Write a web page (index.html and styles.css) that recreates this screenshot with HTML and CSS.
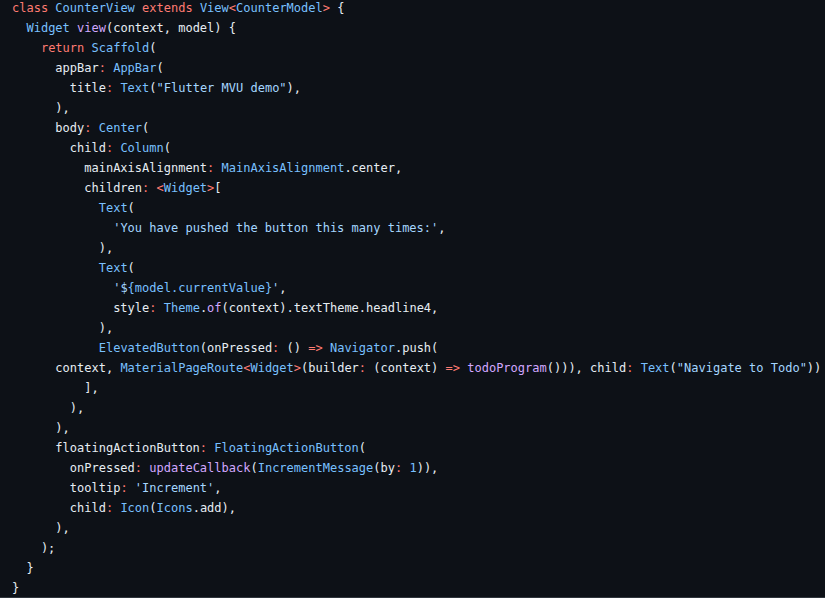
FILE: index.html
```html
<!DOCTYPE html>
<html lang="en">
<head>
    <meta charset="UTF-8">
    <meta name="viewport" content="width=device-width, initial-scale=1.0">
    <title>CounterView</title>
    <link rel="stylesheet" href="styles.css">
</head>
<body>
    <div class="code-view">
<pre class="code"><span class="k">class</span> <span class="t">CounterView</span> <span class="k">extends</span> <span class="t">View</span><span class="k">&lt;</span><span class="t">CounterModel</span><span class="k">&gt;</span> {
  <span class="t">Widget</span> <span class="f">view</span>(context, model) {
    <span class="k">return</span> <span class="t">Scaffold</span>(
      appBar<span class="k">:</span> <span class="t">AppBar</span>(
        title<span class="k">:</span> <span class="t">Text</span>(<span class="s">"Flutter MVU demo"</span>),
      ),
      body<span class="k">:</span> <span class="t">Center</span>(
        child<span class="k">:</span> <span class="t">Column</span>(
          mainAxisAlignment<span class="k">:</span> <span class="t">MainAxisAlignment</span>.center,
          children<span class="k">:</span> <span class="k">&lt;</span><span class="t">Widget</span><span class="k">&gt;</span>[
            <span class="t">Text</span>(
              <span class="s">'You have pushed the button this many times:'</span>,
            ),
            <span class="t">Text</span>(
              <span class="s">'$</span><span class="t">{model.currentValue}</span><span class="s">'</span>,
              style<span class="k">:</span> <span class="t">Theme</span>.<span class="f">of</span>(context).textTheme.headline4,
            ),
            <span class="t">ElevatedButton</span>(onPressed<span class="k">:</span> () <span class="k">=&gt;</span> <span class="t">Navigator</span>.push(
      context, <span class="t">MaterialPageRoute</span><span class="k">&lt;</span><span class="t">Widget</span><span class="k">&gt;</span>(builder<span class="k">:</span> (context) <span class="k">=&gt;</span> <span class="f">todoProgram</span>())), child<span class="k">:</span> <span class="t">Text</span>(<span class="s">"Navigate to Todo"</span>))
          ],
        ),
      ),
      floatingActionButton<span class="k">:</span> <span class="t">FloatingActionButton</span>(
        onPressed<span class="k">:</span> <span class="f">updateCallback</span>(<span class="t">IncrementMessage</span>(by<span class="k">:</span> <span class="t">1</span>)),
        tooltip<span class="k">:</span> <span class="s">'Increment'</span>,
        child<span class="k">:</span> <span class="t">Icon</span>(<span class="t">Icons</span>.add),
      ),
    );
  }
}</pre>
    </div>
</body>
</html>
```

FILE: styles.css
```css
html, body {
    margin: 0;
    background-color: #0d1117;
}
body {
    height: 598px;
    overflow: hidden;
}
.code-view {
    height: 598px;
    box-sizing: border-box;
    border-bottom: 1px solid #30363d;
    overflow: hidden;
}
.code {
    margin: -2px 0 0;
    padding: 0 12px;
    font-family: 'DejaVu Sans Mono', 'Liberation Mono', monospace;
    font-size: 12px;
    line-height: 20px;
    color: #e6edf3;
    white-space: pre;
}
.k {
    color: #ff7b72;
}
.t {
    color: #79c0ff;
}
.f {
    color: #d2a8ff;
}
.s {
    color: #a5d6ff;
}
```
